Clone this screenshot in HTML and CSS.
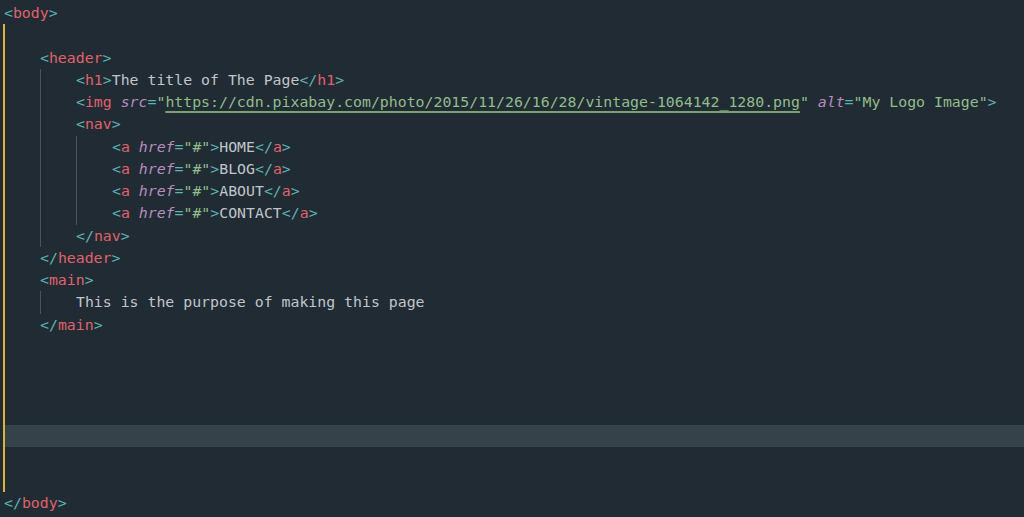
FILE: index.html
```html
<!DOCTYPE html>
<html lang="en">
<head>
  <meta charset="UTF-8">
  <title>index.html</title>
  <link rel="stylesheet" href="styles.css">
</head>
<body>

<div class="editor">
  <div class="line"><span class="p">&lt;</span><span class="t">body</span><span class="p">&gt;</span></div>

  <div class="block body-block">
    <div class="line"></div>
    <div class="line"><span class="p">&lt;</span><span class="t">header</span><span class="p">&gt;</span></div>
    <div class="block guide">
      <div class="line"><span class="p">&lt;</span><span class="t">h1</span><span class="p">&gt;</span>The title of The Page<span class="p">&lt;/</span><span class="t">h1</span><span class="p">&gt;</span></div>
      <div class="line"><span class="p">&lt;</span><span class="t">img</span> <span class="a">src</span><span class="p">=</span><span class="s">"<span class="url">https://cdn.pixabay.com/photo/2015/11/26/16/28/vintage-1064142_1280.png</span>"</span> <span class="a">alt</span><span class="p">=</span><span class="s">"My Logo Image"</span><span class="p">&gt;</span></div>
      <div class="line"><span class="p">&lt;</span><span class="t">nav</span><span class="p">&gt;</span></div>
      <div class="block guide">
        <div class="line"><span class="p">&lt;</span><span class="t">a</span> <span class="a">href</span><span class="p">=</span><span class="s">"#"</span><span class="p">&gt;</span>HOME<span class="p">&lt;/</span><span class="t">a</span><span class="p">&gt;</span></div>
        <div class="line"><span class="p">&lt;</span><span class="t">a</span> <span class="a">href</span><span class="p">=</span><span class="s">"#"</span><span class="p">&gt;</span>BLOG<span class="p">&lt;/</span><span class="t">a</span><span class="p">&gt;</span></div>
        <div class="line"><span class="p">&lt;</span><span class="t">a</span> <span class="a">href</span><span class="p">=</span><span class="s">"#"</span><span class="p">&gt;</span>ABOUT<span class="p">&lt;/</span><span class="t">a</span><span class="p">&gt;</span></div>
        <div class="line"><span class="p">&lt;</span><span class="t">a</span> <span class="a">href</span><span class="p">=</span><span class="s">"#"</span><span class="p">&gt;</span>CONTACT<span class="p">&lt;/</span><span class="t">a</span><span class="p">&gt;</span></div>
      </div>
      <div class="line"><span class="p">&lt;/</span><span class="t">nav</span><span class="p">&gt;</span></div>
    </div>
    <div class="line"><span class="p">&lt;/</span><span class="t">header</span><span class="p">&gt;</span></div>
    <div class="line"><span class="p">&lt;</span><span class="t">main</span><span class="p">&gt;</span></div>
    <div class="block guide">
      <div class="line">This is the purpose of making this page</div>
    </div>
    <div class="line"><span class="p">&lt;/</span><span class="t">main</span><span class="p">&gt;</span></div>
    <div class="line"></div>
    <div class="line"></div>
    <div class="line"></div>
    <div class="line"></div>
    <div class="line current"></div>
    <div class="line"></div>
    <div class="line"></div>
  </div>

  <div class="line"><span class="p">&lt;/</span><span class="t">body</span><span class="p">&gt;</span></div>
</div>

</body>
</html>
```

FILE: styles.css
```css
html, body {
  margin: 0;
  height: 100%;
  background-color: #202b33;
  overflow: hidden;
}

.editor {
  padding-top: 2px;
  font-family: "DejaVu Sans Mono", "Liberation Mono", monospace;
  font-size: 14.85px;
  color: #c0c5cb;
}

.line {
  height: 22.25px;
  line-height: 22.25px;
  padding-left: 4px;
  white-space: pre;
}

.body-block {
  margin-left: 3px;
  border-left: 2px solid #d9b441;
}

.block > .line {
  padding-left: 35px;
}

.guide {
  margin-left: 35px;
  border-left: 1px solid #4a545c;
}

.line.current {
  background-color: #36424a;
}

/* syntax colours */
.p {
  color: #5fb3b3;
}

.t {
  color: #e0626b;
}

.a {
  color: #b98cc0;
  font-style: italic;
}

.s {
  color: #92bd8c;
}

.url {
  text-decoration: underline;
  text-decoration-color: #7aa36f;
  text-decoration-thickness: 2px;
  text-underline-offset: 4px;
  text-decoration-skip-ink: none;
}
```
